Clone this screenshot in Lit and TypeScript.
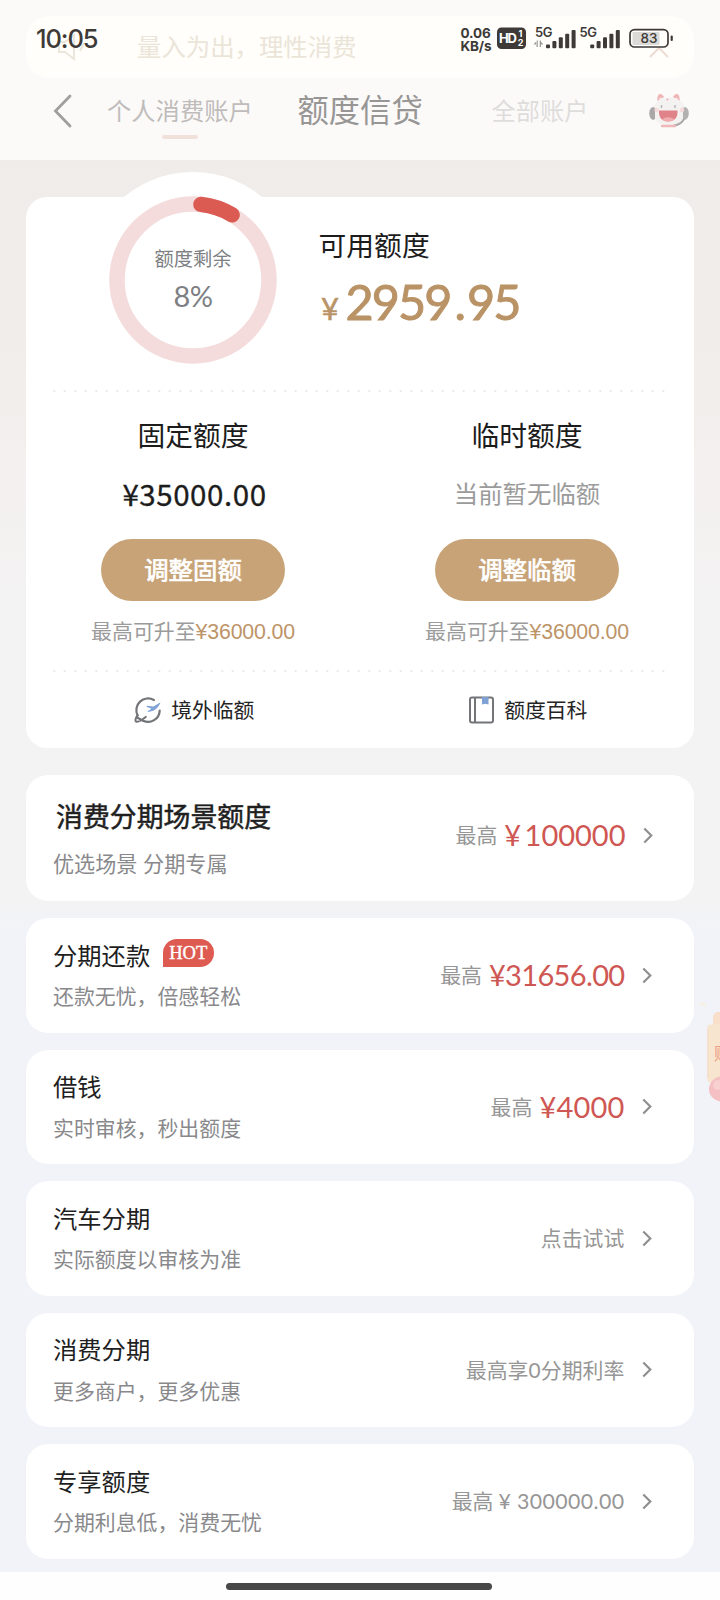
import { LitElement, html, css, svg, nothing } from "lit";
import { customElement, property } from "lit/decorators.js";

const textBase = css`
  :host {
    font-family: "Noto Sans CJK SC", sans-serif;
    box-sizing: border-box;
  }
  * {
    box-sizing: border-box;
  }
  .num {
    font-family: Lato, "Noto Sans CJK SC", sans-serif;
  }
`;

@customElement("status-bar")
class StatusBar extends LitElement {
  static styles = [
    textBase,
    css`
      :host {
        display: flex;
        align-items: flex-start;
        height: 60px;
        padding: 24px 46px 0 36px;
        color: #3d3a38;
      }
      .time {
        font: 500 25.5px/30px Inter, sans-serif;
        letter-spacing: -1.1px;
        flex: 1;
      }
      .speed {
        display: flex;
        flex-direction: column;
        font: 700 13.5px/13px Inter, sans-serif;
        letter-spacing: -0.15px;
        width: 36.5px;
        padding-top: 3px;
        white-space: nowrap;
      }
      .icons {
        display: block;
        overflow: visible;
      }
      .t {
        font-family: Inter, sans-serif;
      }
    `,
  ];

  private bars(x: number) {
    return [0, 1, 2, 3, 4].map(
      (i) => svg`<rect x=${x + i * 6.4} y=${20.5 - i * 3.6} width="4" height=${3.8 + i * 3.6} rx="1" />`
    );
  }

  render() {
    return html`
      <div class="time">10:05</div>
      <div class="speed"><span>0.06</span><span>KB/s</span></div>
      <svg class="icons" width="177" height="30" viewBox="0 0 177 30" fill="#3d3a38">
        <rect x="0" y="3.500" width="29" height="21.500" rx="4.500" />
        <text class="t" x="2" y="19" font-size="13" font-weight="700" fill="#fff" textLength="18">HD</text>
        <text class="t" x="21.500" y="13" font-size="9" font-weight="700" fill="#fff">1</text>
        <text class="t" x="20.800" y="22.300" font-size="9" font-weight="700" fill="#fff">2</text>
        <text class="t" x="38" y="13.300" font-size="13" font-weight="600" textLength="17.500">5G</text>
        <path d="M36.500 20.500h3.500v-4zM39.500 16.500h1.300v6.500h-1.300zM42.700 16.500H44V23h-1.300zM43.500 17l2.800 3.500h-2.800z" opacity=".5" />
        ${this.bars(49)}
        <text class="t" x="82.500" y="13.300" font-size="13" font-weight="600" textLength="17.500">5G</text>
        ${this.bars(93.2)}
        <rect x="135.500" y="8" width="27" height="13" fill="#dcdad7" rx="1" />
        <rect x="133" y="5.600" width="38" height="17.400" rx="4.500" fill="none" stroke="#3d3a38" stroke-width="1.700" />
        <rect x="173.600" y="11.500" width="2.200" height="5.500" rx="1" />
        <text class="t" x="143.500" y="19.200" font-size="13.500" font-weight="500" textLength="17">83</text>
      </svg>
    `;
  }
}

@customElement("page-header")
class PageHeader extends LitElement {
  static styles = [
    textBase,
    css`
      :host {
        display: block;
        position: relative;
        height: 159.5px;
        background: #fbfaf9;
        padding-top: 16px;
      }
      .notice {
        margin: 0 26px;
        height: 62px;
        border-radius: 24px;
        background: #fffefa;
        display: flex;
        align-items: center;
        padding: 0 20px 0 30px;
        color: #ebe4d8;
        font-size: 24.4px;
      }
      .notice span {
        flex: 1;
        padding-left: 49px;
        padding-bottom: 4px;
      }
      .nav {
        display: flex;
        align-items: center;
        height: 66px;
        white-space: nowrap;
      }
      .back {
        margin-left: 53px;
        width: 54px;
      }
      .tab {
        position: relative;
        font-size: 24.3px;
        line-height: 36px;
        color: #bfbcbb;
        width: 190.5px;
        padding-bottom: 2px;
      }
      .tab::after {
        content: "";
        position: absolute;
        left: 55px;
        bottom: -8.5px;
        width: 36px;
        height: 4px;
        border-radius: 2px;
        background: #f1e1db;
      }
      .title {
        font-size: 31.3px;
        line-height: 40px;
        color: #989695;
        width: 194px;
        padding-bottom: 4px;
      }
      .all {
        font-size: 24.2px;
        color: #dfdddc;
        width: 157px;
        padding-bottom: 3px;
      }
      .status {
        position: absolute;
        inset: 0 0 auto 0;
      }
    `,
  ];

  render() {
    return html`
      <div class="notice">
        <svg width="32" height="28" viewBox="0 0 32 28" fill="none" stroke="#ebe6dc" stroke-width="2">
          <path d="M3 9v10h6l9 7V2L9 9zM24 18l4-8" />
        </svg>
        <span>量入为出，理性消费</span>
        <svg width="28" height="28" viewBox="0 0 28 28" fill="none" stroke="#eddcd3" stroke-width="2">
          <path d="M4 24l9-9 9 9" />
        </svg>
      </div>
      <div class="nav">
        <svg class="back" width="54" height="34" viewBox="0 0 54 34" fill="none" stroke="#a19f9e" stroke-width="2.800" stroke-linecap="round">
          <path d="M17 2L2.500 17 17 32" />
        </svg>
        <div class="tab">个人消费账户</div>
        <div class="title">额度信贷</div>
        <div class="all">全部账户</div>
        <svg width="40" height="36" viewBox="0 0 40 36">
          <path d="M8.500 8c-1-8 4-9 6.500-4zM30.500 8c1-8-4-9-6.500-4z" fill="#efb4b6" />
          <path d="M11 5l2 3M28 5l-2 3" stroke="#fbeceb" stroke-width="2" />
          <ellipse cx="20" cy="18.500" rx="16.500" ry="14" fill="#f4f2f0" />
          <path d="M4 14c-5 1-5 11 0 13l2-1V15z" fill="#a9a7a7" />
          <path d="M36 14c5 1 5 11 0 13l-2-1V15z" fill="#b3b1b1" />
          <circle cx="7.500" cy="17" r="2.200" fill="#f6dada" />
          <circle cx="33" cy="17" r="2.200" fill="#f6dada" />
          <path d="M12.500 12v3M26 12v3" fill="none" stroke="#b5b3b3" stroke-width="1.400" />
          <circle cx="18.500" cy="6.500" r="1" fill="#eda8aa" />
          <path d="M10 17.500h18.500c.5 7-3 11-9.300 11S9.500 24.500 10 17.500z" fill="#df8388" />
          <path d="M13 26.500c4-3 8.500-3 12.500 0-4 2.500-8.500 2.500-12.500 0z" fill="#f0abae" />
          <path d="M35 26c-2 4-6 6-10 6.500" fill="none" stroke="#a9a7a7" stroke-width="2" />
          <path d="M13 33h13" stroke="#f0b7b9" stroke-width="2.500" stroke-linecap="round" />
        </svg>
      </div>
      <status-bar class="status"></status-bar>
    `;
  }
}

@customElement("quota-column")
class QuotaColumn extends LitElement {
  @property() heading = "";
  @property() amount = "";
  @property() empty = "";
  @property() action = "";
  @property() cap = "";

  static styles = [
    textBase,
    css`
      :host {
        display: flex;
        flex-direction: column;
        align-items: center;
        padding-top: 22.5px;
        white-space: nowrap;
      }
      .heading {
        font-size: 27.8px;
        line-height: 40px;
        color: #1c1c1c;
      }
      .value {
        height: 44px;
        margin-top: 18.5px;
        line-height: 44px;
        color: #1c1c1c;
      }
      .amount {
        font-size: 29.5px;
        line-height: 40px;
        letter-spacing: 0.55px;
        -webkit-text-stroke: 0.3px #1c1c1c;
        padding-left: 3px;
      }
      .empty {
        font-size: 24.4px;
        color: #9b9b9b;
        line-height: 40px;
      }
      .btn {
        margin-top: 22px;
        width: 184px;
        height: 62.5px;
        border: 0;
        border-radius: 32px;
        background: #c7a377;
        color: #fff;
        font: 400 24.4px/58px "Noto Sans CJK SC", sans-serif;
        -webkit-text-stroke: 0.7px #fff;
        padding: 0 0 2px;
      }
      .hint {
        margin-top: 14px;
        font-size: 20.9px;
        line-height: 31px;
        color: #9b9b9b;
        display: flex;
      }
      .cap {
        font-family: "Liberation Sans", sans-serif;
        font-size: 21.3px;
        line-height: 34px;
        letter-spacing: -0.15px;
        color: #bd9468;
      }
    `,
  ];

  render() {
    return html`
      <div class="heading">${this.heading}</div>
      <div class="value">
        ${this.amount
          ? html`<div class="amount">${this.amount}</div>`
          : html`<div class="empty">${this.empty}</div>`}
      </div>
      <button class="btn">${this.action}</button>
      <div class="hint"><span>最高可升至</span><span class="cap">${this.cap}</span></div>
    `;
  }
}

@customElement("quota-card")
class QuotaCard extends LitElement {
  static styles = [
    textBase,
    css`
      :host {
        display: block;
        height: 551.5px;
        background: #fff;
        border-radius: 21px;
      }
      .top {
        display: flex;
        height: 193px;
        padding-left: 59px;
      }
      .dial {
        position: relative;
        width: 216px;
        height: 216px;
        margin-top: -24.5px;
      }
      .dial svg {
        display: block;
      }
      .label {
        position: absolute;
        inset: 0;
        display: flex;
        flex-direction: column;
        align-items: center;
        padding-top: 70.5px;
        color: #7d7f83;
        font-size: 19.3px;
        line-height: 30px;
      }
      .pct {
        font-size: 29px;
        line-height: 38px;
        margin-top: 4.5px;
        letter-spacing: -0.6px;
      }
      .avail {
        padding: 27.5px 0 0 17.5px;
        white-space: nowrap;
      }
      .name {
        font-size: 27.8px;
        line-height: 40px;
        color: #1c1c1c;
      }
      .sum {
        display: flex;
        align-items: baseline;
        margin-top: 7.5px;
        color: #b99366;
        line-height: 58px;
      }
      .yen {
        font: 400 31px/58px Lato, sans-serif;
        -webkit-text-stroke: 0.5px #b99366;
        margin: 0 6.5px 0 2.5px;
      }
      .big {
        font: 400 48.5px/58px Lato, sans-serif;
        -webkit-text-stroke: 1px #b99366;
        letter-spacing: -1.9px;
      }
      .point {
        padding: 0 3px 0 4px;
      }
      .dots {
        height: 2px;
        margin: 0 26px 0 22.5px;
        background: radial-gradient(circle, #e3e3e3 0.8px, transparent 1.2px) 0 0 / 10.5px 2px repeat-x;
      }
      .cols,
      .links {
        display: grid;
        grid-template-columns: 1fr 1fr;
      }
      .cols {
        height: 278px;
      }
      .links {
        height: 76.5px;
      }
      .link {
        display: flex;
        align-items: center;
        justify-content: center;
        gap: 9px;
        font-size: 20.8px;
        color: #242424;
        padding-left: 2.5px;
      }
      .link span {
        padding-bottom: 2px;
      }
      .link svg {
        overflow: visible;
      }
    `,
  ];

  render() {
    const r = 76;
    const at = (deg: number) => {
      const a = (deg * Math.PI) / 180;
      return `${108 + r * Math.sin(a)} ${108 - r * Math.cos(a)}`;
    };
    return html`
      <div class="top">
        <div class="dial">
          <svg width="216" height="216" viewBox="0 0 216 216" fill="none">
            <circle cx="108" cy="108" r="108" fill="#fff" />
            <circle cx="108" cy="108" r=${r} stroke="#f4dcdd" stroke-width="15.500" />
            <path d="M${at(6)}A${r} ${r} 0 0 1 ${at(31)}" stroke="#db5a52" stroke-width="15.500" stroke-linecap="round" />
          </svg>
          <div class="label">
            <div>额度剩余</div>
            <div class="pct num">8%</div>
          </div>
        </div>
        <div class="avail">
          <div class="name">可用额度</div>
          <div class="sum">
            <span class="yen">¥</span><span class="big">2959<span class="point">.</span>95</span>
          </div>
        </div>
      </div>
      <div class="dots"></div>
      <div class="cols">
        <quota-column heading="固定额度" amount="¥35000.00" action="调整固额" cap="¥36000.00"></quota-column>
        <quota-column heading="临时额度" empty="当前暂无临额" action="调整临额" cap="¥36000.00"></quota-column>
      </div>
      <div class="dots"></div>
      <div class="links">
        <div class="link">
          <svg width="28" height="28" viewBox="0 0 28 28" fill="none" stroke="#737578" stroke-width="2.200" stroke-linecap="round">
            <path d="M19.900 4A11.700 11.700 0 0 0 3.600 19.400M25.700 14.600A11.700 11.700 0 0 1 9.100 24.800" />
            <path d="M3.600 19.400c-1.900 2.800-2.600 5.100-1.700 5.900 1.300 1 5.500-.9 9.800-4.300M3 21.500l6.100 3.300" />
            <path d="M26.500 6.300l-7 4.200-6.500-.8-.5 1 5 2.100-4 2.500.6.800 5.100-1.300c3.500-1.800 6.300-5 7.300-8.500z" fill="#7fa3d6" stroke="none" />
          </svg>
          <span>境外临额</span>
        </div>
        <div class="link">
          <svg width="26" height="28" viewBox="0 0 26 28" fill="none" stroke="#737578" stroke-width="2">
            <rect x="1" y="1.500" width="23" height="25" rx="2" />
            <path d="M6 1.500v25" />
            <path d="M13 1h6.500v7.500l-3.250-.8-3.250.8z" fill="#7fa0d4" stroke="none" />
          </svg>
          <span>额度百科</span>
        </div>
      </div>
    `;
  }
}

@customElement("offer-card")
class OfferCard extends LitElement {
  @property() name = "";
  @property() desc = "";
  @property() prefix = "";
  @property() amount = "";
  @property() note = "";
  @property({ type: Boolean }) hot = false;
  @property({ type: Boolean, reflect: true }) large = false;

  static styles = [
    textBase,
    css`
      :host {
        display: flex;
        justify-content: space-between;
        height: 114.5px;
        padding: 18.5px 42.5px 0 27px;
        background: #fff;
        border-radius: 22px;
        white-space: nowrap;
      }
      .name {
        display: flex;
        align-items: flex-start;
        font-size: 24.3px;
        line-height: 36px;
        color: #1f1f1f;
      }
      .desc {
        font-size: 20.9px;
        line-height: 30px;
        margin-top: 7.5px;
        color: #89898c;
      }
      .hot {
        margin: 2.5px 0 0 12.5px;
        width: 51px;
        height: 28px;
        border-radius: 14px 14px 14px 0;
        background: #dd5b50;
        color: #fff;
        font: 400 18.5px/29px "Liberation Serif", serif;
        -webkit-text-stroke: 0.4px #fff;
        text-align: center;
      }
      .right {
        display: flex;
        align-items: center;
        height: 77px;
        color: #969696;
        font-size: 20.9px;
      }
      .prefix {
        padding-bottom: 2px;
      }
      .amount {
        color: #cf5753;
        font-size: 29px;
        letter-spacing: 0.2px;
        margin-left: 7px;
        padding-bottom: 1px;
      }
      .tight {
        letter-spacing: -0.65px;
      }
      .note {
        letter-spacing: 0.05px;
        padding-bottom: 2px;
      }
      .figure {
        font-size: 21.3px;
        letter-spacing: 0.4px;
        padding: 0;
        margin-left: 5px;
      }
      .arrow {
        margin-left: 17px;
      }
      :host([large]) {
        height: 126.5px;
        padding: 21.5px 41.5px 0 27px;
      }
      :host([large]) .name {
        font-size: 26.9px;
        line-height: 40px;
        padding-left: 3px;
        -webkit-text-stroke: 0.5px #1f1f1f;
      }
      :host([large]) .desc {
        font-size: 21.1px;
        margin-top: 11.5px;
        word-spacing: 1px;
      }
      :host([large]) .right {
        height: 78px;
      }
      :host([large]) .amount {
        letter-spacing: 0;
        word-spacing: -4px;
      }
    `,
  ];

  render() {
    const isFigure = this.note.startsWith("¥");
    const isTight = this.amount.length > 6;
    return html`
      <div>
        <div class="name">${this.name}${this.hot ? html`<span class="hot">HOT</span>` : nothing}</div>
        <div class="desc">${this.desc}</div>
      </div>
      <div class="right">
        ${this.prefix ? html`<span class="prefix">${this.prefix}</span>` : nothing}
        ${this.amount ? html`<span class="amount num ${isTight ? "tight" : ""}">${this.amount}</span>` : nothing}
        ${this.note ? html`<span class="note num ${isFigure ? "figure" : ""}">${this.note}</span>` : nothing}
        <svg class="arrow" width="10" height="17" viewBox="0 0 10 17" fill="none" stroke="#8f8f8f" stroke-width="2.200">
          <path d="M1.300 1.500l7 7-7 7" />
        </svg>
      </div>
    `;
  }
}

@customElement("app-root")
class AppRoot extends LitElement {
  static styles = [
    textBase,
    css`
      :host {
        display: block;
        position: relative;
        width: 720px;
        height: 1600px;
        overflow: hidden;
        background: linear-gradient(
          #f0ece9 160px,
          #f2eeec 400px,
          #f4f3f3 600px,
          #f3f3f4 900px,
          #f2f3f8 930px
        );
      }
      .quota {
        margin: 37px 26px 0;
      }
      .list {
        display: flex;
        flex-direction: column;
        gap: 17px;
        margin: 26.5px 26px 0;
      }
      .home {
        display: flex;
        justify-content: center;
        margin-top: 13px;
        height: 29px;
        padding-top: 11.5px;
        background: #fefefe;
      }
      .home i {
        width: 266px;
        height: 6.5px;
        border-radius: 4px;
        background: #484848;
        margin-right: 3px;
      }
      .float {
        position: absolute;
        right: 0;
        top: 998px;
      }
    `,
  ];

  render() {
    return html`
      <page-header></page-header>
      <quota-card class="quota"></quota-card>
      <div class="list">
        <offer-card large name="消费分期场景额度" desc="优选场景 分期专属" prefix="最高" amount="¥ 100000"></offer-card>
        <offer-card hot name="分期还款" desc="还款无忧，倍感轻松" prefix="最高" amount="¥31656.00"></offer-card>
        <offer-card name="借钱" desc="实时审核，秒出额度" prefix="最高" amount="¥4000"></offer-card>
        <offer-card name="汽车分期" desc="实际额度以审核为准" note="点击试试"></offer-card>
        <offer-card name="消费分期" desc="更多商户，更多优惠" note="最高享0分期利率"></offer-card>
        <offer-card name="专享额度" desc="分期利息低，消费无忧" prefix="最高" note="¥ 300000.00"></offer-card>
      </div>
      <div class="home"><i></i></div>
      <svg class="float" width="24" height="106" viewBox="0 0 24 106">
        <ellipse cx="7" cy="6.500" rx="4" ry="2" fill="#f5f1ea" transform="rotate(10 7 6.500)" />
        <path d="M24 14h-3q-4 1-4 6v8h7z" fill="#f9dfca" />
        <rect x="11.500" y="26.500" width="20" height="58" rx="3" fill="#f8e5d0" />
        <path d="M12 30v50" stroke="#f3dbc5" stroke-width="1.200" />
        <text x="18" y="62" font-size="17" fill="#ee9c84" font-family="Noto Sans CJK SC">账</text>
        <circle cx="25.500" cy="91" r="12.500" fill="#f4c0c2" />
        <circle cx="22" cy="87" r="5" fill="#f7d0cf" />
      </svg>
    `;
  }
}
